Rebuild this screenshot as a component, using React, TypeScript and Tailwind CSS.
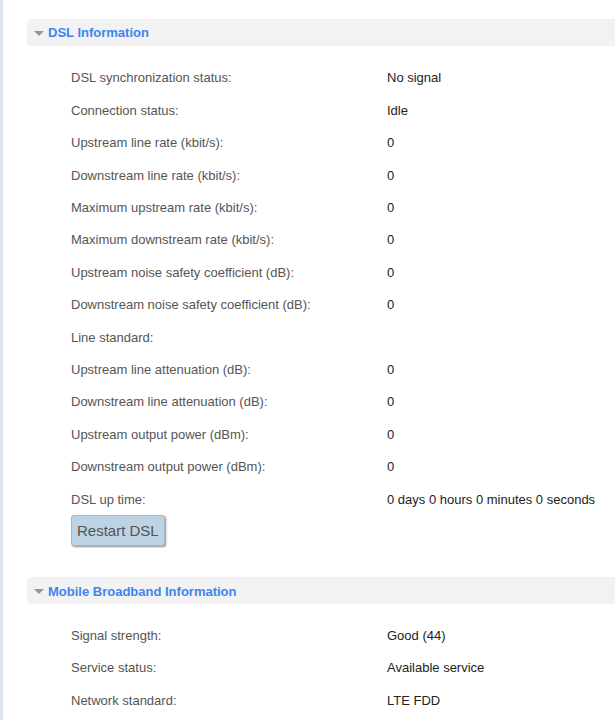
import React from 'react';

const dslRows: [string, string][] = [
  ['DSL synchronization status:', 'No signal'],
  ['Connection status:', 'Idle'],
  ['Upstream line rate (kbit/s):', '0'],
  ['Downstream line rate (kbit/s):', '0'],
  ['Maximum upstream rate (kbit/s):', '0'],
  ['Maximum downstream rate (kbit/s):', '0'],
  ['Upstream noise safety coefficient (dB):', '0'],
  ['Downstream noise safety coefficient (dB):', '0'],
  ['Line standard:', ''],
  ['Upstream line attenuation (dB):', '0'],
  ['Downstream line attenuation (dB):', '0'],
  ['Upstream output power (dBm):', '0'],
  ['Downstream output power (dBm):', '0'],
  ['DSL up time:', '0 days 0 hours 0 minutes 0 seconds'],
];

const mobileRows: [string, string][] = [
  ['Signal strength:', 'Good (44)'],
  ['Service status:', 'Available service'],
  ['Network standard:', 'LTE FDD'],
];

const SectionHeader = ({ title }: { title: string }) => (
  <div className="flex items-center h-[27px] bg-[#f2f2f2] rounded-l-[4px] pl-[7px] pt-[1px]">
    <svg width="10" height="6" viewBox="0 0 10 6" className="mr-[4px] mt-[2px]">
      <polygon points="0,0 10,0 5,5" fill="#8a9ba8" />
    </svg>
    <span className="text-[13px] font-bold text-[#3d85f0]">{title}</span>
  </div>
);

const InfoRows = ({ rows }: { rows: [string, string][] }) => (
  <div className="pl-[44px]">
    {rows.map(([label, value]) => (
      <div key={label} className="flex items-center h-[32.4px] text-[13px]">
        <div className="w-[316px] text-[#555]">{label}</div>
        <div className="text-[#222]">{value}</div>
      </div>
    ))}
  </div>
);

const App = () => {
  return (
    <div
      className="min-h-screen bg-white border-l-[3px] border-[#dfe5ee] pl-[24px] pt-[19px]"
      style={{ fontFamily: '"Liberation Sans", Arial, sans-serif' }}
    >
      <SectionHeader title="DSL Information" />
      <div className="mt-[16px]">
        <InfoRows rows={dslRows} />
      </div>
      <div className="pl-[44px]">
        <button className="h-[31px] px-[5px] bg-[#bdd3e4] border border-[#a9b8c4] rounded-[3px] shadow-[1px_1px_2px_rgba(0,0,0,0.45)] text-[15px] text-[#555]">
          Restart DSL
        </button>
      </div>
      <div className="mt-[31px]">
        <SectionHeader title="Mobile Broadband Information" />
      </div>
      <div className="mt-[15px]">
        <InfoRows rows={mobileRows} />
      </div>
    </div>
  );
};

export default App;
